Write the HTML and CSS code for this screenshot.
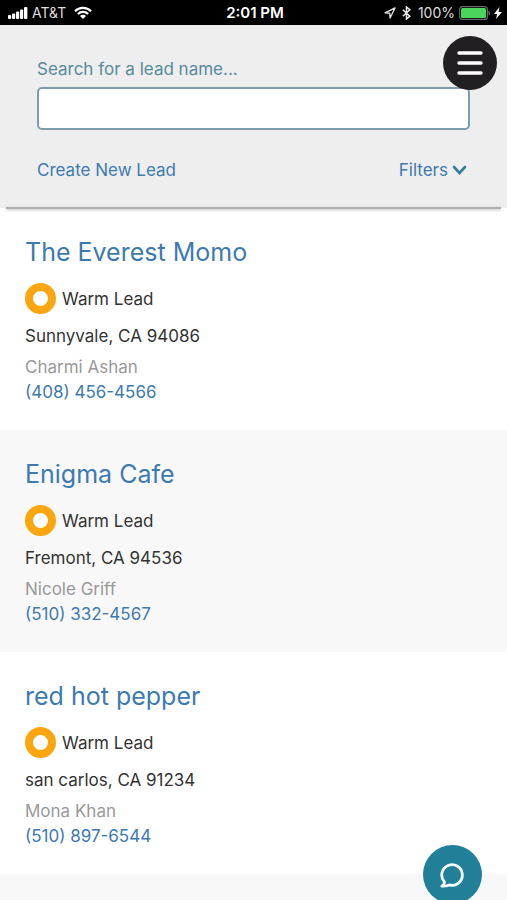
FILE: index.html
```html
<!DOCTYPE html>
<html lang="en">
<head>
<meta charset="utf-8">
<meta name="viewport" content="width=device-width, initial-scale=1">
<title>Leads</title>
<link rel="stylesheet" href="styles.css">
</head>
<body>
<div class="status">
  <div class="status-side">
    <svg width="20" height="12" viewBox="0 0 20 12" fill="#fff" aria-hidden="true"><rect x="0" y="8" width="3.2" height="4" rx="1"/><rect x="4" y="6.5" width="3.2" height="5.5" rx="1"/><rect x="8" y="4.5" width="3.2" height="7.5" rx="1"/><rect x="12" y="2.5" width="3.2" height="9.5" rx="1"/><rect x="16" y="0" width="3.4" height="12" rx="1"/></svg>
    <span class="carrier">AT&amp;T</span>
    <svg class="wifi" width="18" height="13" viewBox="0 0 18 13" fill="none" stroke="#fff" stroke-width="2.2" aria-hidden="true"><path d="M1 5.1a11.4 11.4 0 0 1 16 0M3.9 8a7.3 7.3 0 0 1 10.2 0"/><path d="M9 13 6 10a4.2 4.2 0 0 1 6 0z" fill="#fff" stroke="none"/></svg>
  </div>
  <time class="clock">2:01 PM</time>
  <div class="status-side status-right">
    <svg width="12" height="12" viewBox="0 0 12 12" fill="none" stroke="#ddd" stroke-width="1.4" stroke-linejoin="round" aria-hidden="true"><path d="M11 1 1 5.8l4.7.5.4 4.7z"/></svg>
    <svg class="bluetooth" width="9" height="14" viewBox="0 0 9 14" fill="none" stroke="#eee" stroke-width="1.5" aria-hidden="true"><path d="m.8 3.8 7.1 6.4L4.5 13V1l3.4 2.8-7.1 6.4"/></svg>
    <span class="percent">100%</span>
    <svg class="battery" width="32" height="14" viewBox="0 0 32 14" aria-hidden="true"><rect x=".6" y=".6" width="27.8" height="12.8" rx="3" fill="none" stroke="#666" stroke-width="1.2"/><rect x="2" y="2" width="25" height="10" rx="1.5" fill="#4cd55d"/><path d="M29.5 4.5c2 .5 2 4.5 0 5z" fill="#666"/></svg>
    <svg width="8" height="12" viewBox="0 0 8 12" fill="#fff" aria-hidden="true"><path d="M5.5 0 0 7h3.2L2 12l6-7H4.6z"/></svg>
  </div>
</div>

<header class="search">
  <label class="search-label" for="lead">Search for a lead name...</label>
  <input class="search-input" id="lead" type="text">
  <div class="search-actions">
    <a class="link" href="#new">Create New Lead</a>
    <button class="filters" type="button">Filters
      <svg width="15" height="10" viewBox="0 0 15 10" fill="none" stroke="#347f91" stroke-width="2.6" stroke-linecap="round" aria-hidden="true"><path d="m2 2 5.5 6L13 2"/></svg>
    </button>
  </div>
</header>

<main class="leads">
  <article class="lead">
    <h2 class="name"><a class="link" href="#everest">The Everest Momo</a></h2>
    <div class="rating"><span class="ring"></span>Warm Lead</div>
    <div class="city">Sunnyvale, CA 94086</div>
    <div class="contact">Charmi Ashan</div>
    <a class="link phone" href="tel:4084564566">(408) 456-4566</a>
  </article>
  <article class="lead">
    <h2 class="name"><a class="link" href="#enigma">Enigma Cafe</a></h2>
    <div class="rating"><span class="ring"></span>Warm Lead</div>
    <div class="city">Fremont, CA 94536</div>
    <div class="contact">Nicole Griff</div>
    <a class="link phone" href="tel:5103324567">(510) 332-4567</a>
  </article>
  <article class="lead">
    <h2 class="name"><a class="link" href="#pepper">red hot pepper</a></h2>
    <div class="rating"><span class="ring"></span>Warm Lead</div>
    <div class="city">san carlos, CA 91234</div>
    <div class="contact">Mona Khan</div>
    <a class="link phone" href="tel:5108976544">(510) 897-6544</a>
  </article>
</main>

<button class="round menu" type="button" aria-label="Menu">
  <svg width="26" height="26" viewBox="0 0 26 26" stroke="#fff" stroke-width="3.4" stroke-linecap="round" aria-hidden="true"><path d="M2 3h22M2 13h22M2 23h22"/></svg>
</button>
<button class="round chat" type="button" aria-label="Chat">
  <svg width="26" height="26" viewBox="0 0 26 26" fill="none" stroke="#f4fbfc" stroke-width="2.8" stroke-linejoin="round" aria-hidden="true"><path d="M1.8 24.2c2-1 2.700-2.400 2.600-4.300a10.300 10.300 0 1 1 4.800 3c-2 1-4.600 1.400-7.400 1.300z"/></svg>
</button>
</body>
</html>
```
FILE: styles.css
```css
* {
  box-sizing: border-box;
}

body {
  margin: 0;
  min-height: 100vh;
  display: flex;
  flex-direction: column;
  background: #f8f8f8;
  color: #333;
  font: 17px/24px Inter, "Liberation Sans", sans-serif;
}

button {
  border: 0;
  padding: 0;
  background: none;
  font: inherit;
  cursor: pointer;
}

svg {
  flex: none;
}

.link {
  color: #3d7ab0;
  text-decoration: none;
}

.status {
  display: grid;
  grid-template-columns: 1fr auto 1fr;
  align-items: center;
  height: 25px;
  padding: 0 5px 0 8px;
  background: #000;
  color: #fff;
  font-size: 14px;
}

.status-side {
  display: flex;
  align-items: center;
}

.status-right {
  justify-content: flex-end;
}

.carrier {
  margin: 0 8px 0 4px;
  color: #ddd;
}

.clock {
  font-size: 15px;
  font-weight: 600;
}

.bluetooth {
  margin: 0 7px 0 6px;
}

.percent {
  color: #ddd;
}

.battery {
  margin: 0 3px 0 4px;
}

.search {
  position: relative;
  padding: 32px 37px 26px;
  background: #eee;
}

/* Shadow inset from both ends of the header's lower edge. */
.search::after {
  content: "";
  position: absolute;
  left: 6px;
  right: 6px;
  bottom: -1px;
  height: 2px;
  background: #b0b0b0;
  box-shadow: 0 1px 3px #bbb;
}

.search-label {
  display: block;
  margin-bottom: 6px;
  color: #568a9c;
}

.search-input {
  display: block;
  width: 100%;
  height: 43px;
  padding: 0 12px;
  border: 2px solid #7b9eac;
  border-radius: 5px;
  background: #fff;
  font: inherit;
}

.search-actions {
  display: flex;
  justify-content: space-between;
  margin-top: 28px;
}

.filters {
  display: flex;
  align-items: center;
  gap: 4px;
  margin-right: 3px;
  color: #3d7ab0;
}

.lead {
  padding: 26px 25px 25px;
  background: #fff;
}

.lead:nth-child(even) {
  background: #f8f8f8;
}

.name {
  margin: 0 0 13px;
  font-size: 25px;
  line-height: 36px;
  font-weight: 400;
}

.rating {
  display: flex;
  align-items: center;
  gap: 6px;
  margin-bottom: 10px;
}

.ring {
  width: 31px;
  height: 31px;
  border: 8px solid #f9a611;
  border-radius: 50%;
  background: #fff;
}

.city {
  margin-bottom: 7px;
}

.contact {
  line-height: 25px;
  color: #999;
}

.phone {
  display: block;
  line-height: 25px;
}

.round {
  position: fixed;
  display: grid;
  place-items: center;
  border-radius: 50%;
}

.menu {
  top: 36px;
  right: 10px;
  width: 54px;
  height: 54px;
  background: #211f21;
}

.chat {
  right: 25px;
  bottom: -4px;
  width: 59px;
  height: 59px;
  background: #227f98;
}
```
